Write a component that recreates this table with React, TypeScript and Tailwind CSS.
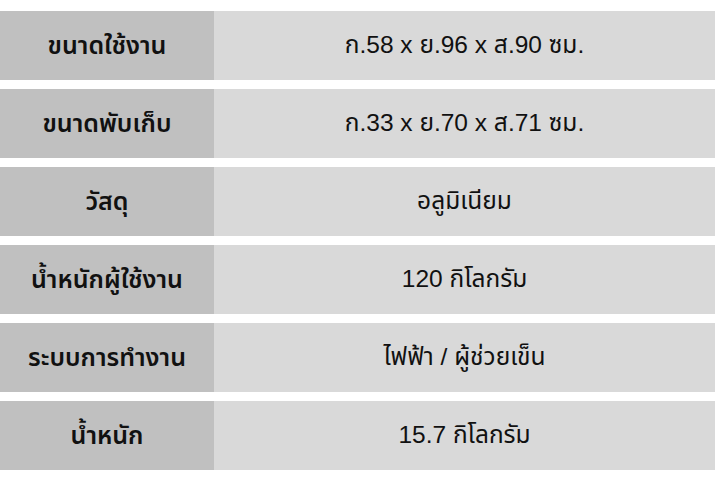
import React from "react";

const rows: [string, string][] = [
  ["ขนาดใช้งาน", "ก.58 x ย.96 x ส.90 ซม."],
  ["ขนาดพับเก็บ", "ก.33 x ย.70 x ส.71 ซม."],
  ["วัสดุ", "อลูมิเนียม"],
  ["น้ำหนักผู้ใช้งาน", "120 กิโลกรัม"],
  ["ระบบการทำงาน", "ไฟฟ้า / ผู้ช่วยเข็น"],
  ["น้ำหนัก", "15.7 กิโลกรัม"],
];

export default function App() {
  return (
    <div
      className="w-[715px] h-[480px] bg-white pt-[11px] flex flex-col gap-[9px]"
      style={{ fontFamily: '"Liberation Sans", "Noto Sans Thai", "Noto Sans", sans-serif' }}
    >
      {rows.map(([k, v]) => (
        <div key={k} className="flex h-[69px]">
          <div className="w-[214px] bg-[#c0c0c0] flex items-center justify-center text-[25px] font-semibold text-[#111]">
            {k}
          </div>
          <div className="flex-1 bg-[#d9d9d9] flex items-center justify-center text-[24.5px] text-[#111]">
            {v}
          </div>
        </div>
      ))}
    </div>
  );
}
